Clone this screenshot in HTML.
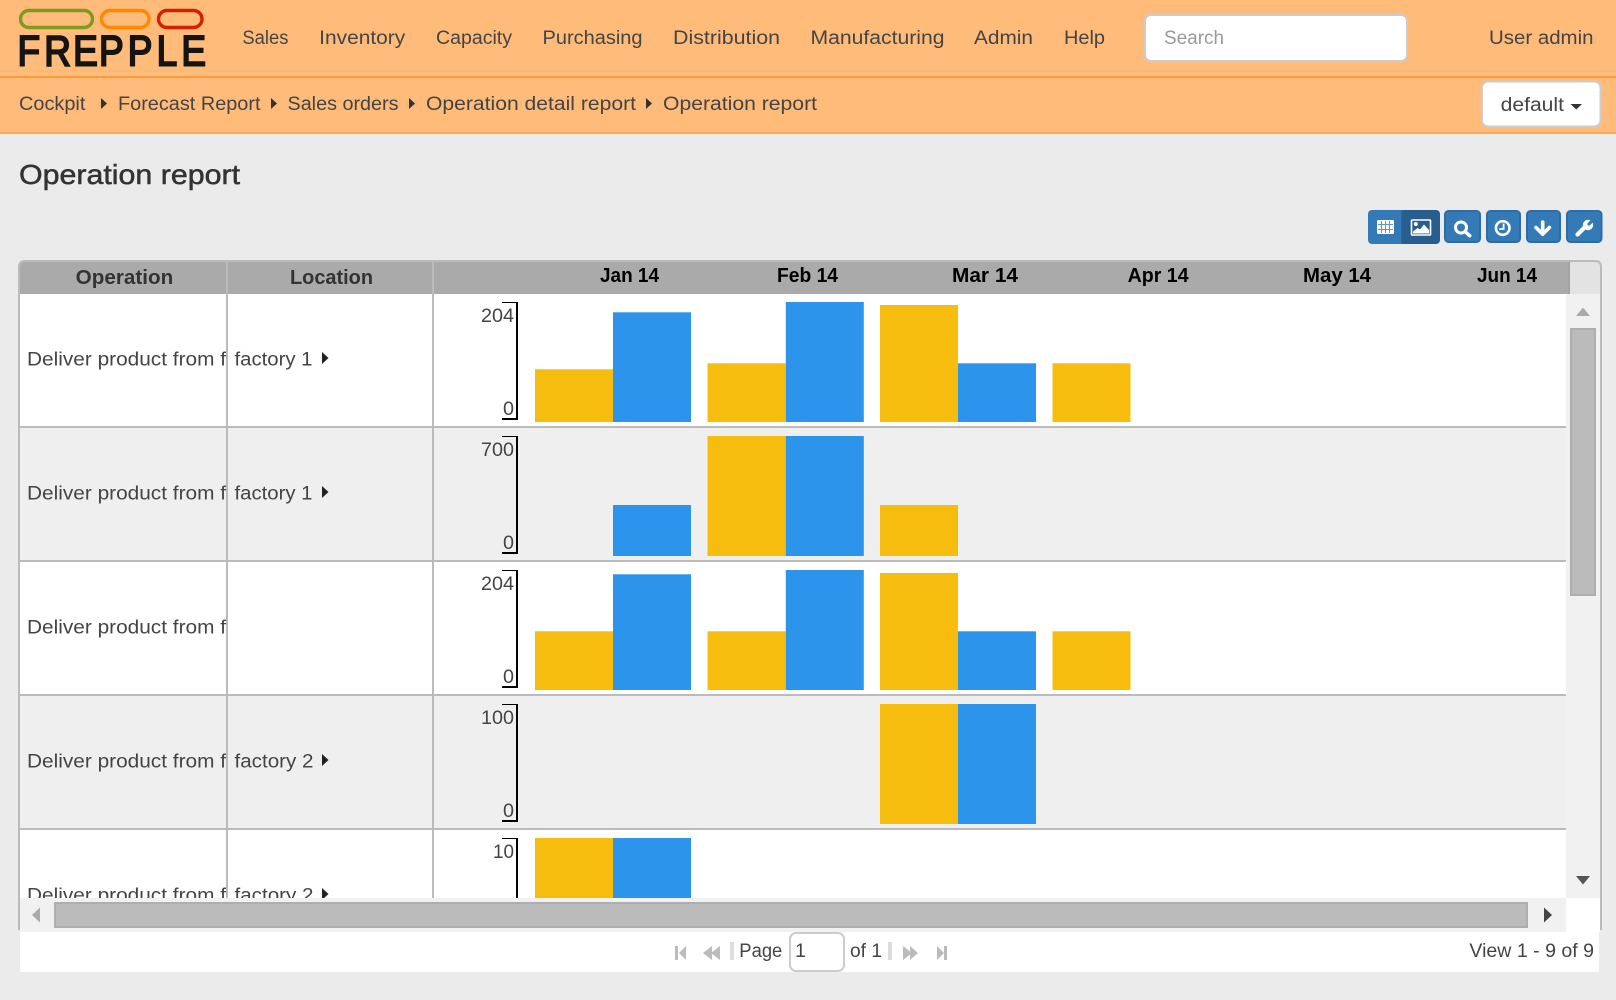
<!DOCTYPE html>
<html lang="en">
<head>
<meta charset="utf-8">
<title>Operation report</title>
<style>
html,body{margin:0;padding:0;background:#ebebeb;width:1616px;height:1000px;overflow:hidden}
svg{display:block;position:absolute;left:0;top:0}
text{font-family:"Liberation Sans",sans-serif;font-size:19.6px;fill:#444;white-space:pre}
.b{font-weight:700;font-size:20px}
.h{fill:#333}
.m{fill:#000}
.t{font-size:28px;fill:#333;stroke:#333;stroke-width:.5px}
.w{fill:#fff}
.ph{fill:#999}
.y{fill:#f6bc0e}
.u{fill:#2c95eb}
.g{fill:#bbb}
.sep{fill:#ddd}
</style>
</head>
<body>
<svg width="1616" height="1000" viewBox="0 0 1616 1000" xmlns="http://www.w3.org/2000/svg">
<defs>
<clipPath id="grid"><rect x="20" y="294" width="1546" height="604"/></clipPath>
<clipPath id="op"><rect x="20" y="294" width="206.5" height="604"/></clipPath>
</defs>
<rect width="1616" height="1000" fill="#ebebeb"/>

<!-- Header -->
<rect width="1616" height="133" fill="#ffbb7a"/>
<rect y="76" width="1616" height="2" fill="#ff9a3c"/>
<rect y="132" width="1616" height="2" fill="#ffa850"/>

<!-- Logo -->
<rect x="20.5" y="10.5" width="72" height="17" rx="8.5" fill="none" stroke="#7f9a1e" stroke-width="3.4"/>
<rect x="101.5" y="10.5" width="47.5" height="17" rx="8.5" fill="none" stroke="#ff8800" stroke-width="3.4"/>
<rect x="158.5" y="10.5" width="43.5" height="17" rx="8.5" fill="none" stroke="#d42000" stroke-width="3.4"/>
<text transform="scale(.87 1)" x="20.1 50.9 84.1 113.8 146.9 180.1 208.5" y="65.5" style="font-size:42.5px;font-weight:400;fill:#141414;stroke:#141414;stroke-width:2px">FREPPLE</text>

<!-- Nav -->
<text x="242.4" y="44" textLength="46" lengthAdjust="spacingAndGlyphs">Sales</text>
<text x="319.2" y="44" textLength="86" lengthAdjust="spacingAndGlyphs">Inventory</text>
<text x="436" y="44" textLength="76" lengthAdjust="spacingAndGlyphs">Capacity</text>
<text x="542.5" y="44" textLength="100" lengthAdjust="spacingAndGlyphs">Purchasing</text>
<text x="673" y="44" textLength="107" lengthAdjust="spacingAndGlyphs">Distribution</text>
<text x="810.5" y="44" textLength="134" lengthAdjust="spacingAndGlyphs">Manufacturing</text>
<text x="974" y="44" textLength="59" lengthAdjust="spacingAndGlyphs">Admin</text>
<text x="1064" y="44" textLength="41" lengthAdjust="spacingAndGlyphs">Help</text>
<rect x="1145" y="15" width="262" height="46" rx="6" fill="#fff" stroke="#ccc" stroke-width="2"/>
<text class="ph" x="1164" y="44" textLength="60" lengthAdjust="spacingAndGlyphs">Search</text>
<text x="1489" y="44" textLength="104.5" lengthAdjust="spacingAndGlyphs">User admin</text>

<!-- Breadcrumbs -->
<text x="19" y="110" textLength="66.4" lengthAdjust="spacingAndGlyphs">Cockpit</text>
<path d="M101 98v11l6-5.5z" fill="#333"/>
<text x="118" y="110" textLength="142.5" lengthAdjust="spacingAndGlyphs">Forecast Report</text>
<path d="M271 98v11l6-5.5z" fill="#333"/>
<text x="287.5" y="110" textLength="111" lengthAdjust="spacingAndGlyphs">Sales orders</text>
<path d="M409 98v11l6-5.5z" fill="#333"/>
<text x="426" y="110" textLength="210" lengthAdjust="spacingAndGlyphs">Operation detail report</text>
<path d="M646 98v11l6-5.5z" fill="#333"/>
<text x="663" y="110" textLength="154" lengthAdjust="spacingAndGlyphs">Operation report</text>
<rect x="1482" y="81.5" width="118.5" height="45" rx="6" fill="#fff" stroke="#ccc" stroke-width="2"/>
<text x="1500.6" y="111" textLength="63.4" lengthAdjust="spacingAndGlyphs">default</text>
<path d="M1570.5 104h11.5l-5.75 5.5z" fill="#333"/>

<!-- Title -->
<text class="t" x="19" y="184" textLength="221" lengthAdjust="spacingAndGlyphs">Operation report</text>

<!-- Toolbar -->
<g>
<path d="M1402 210h-30a4 4 0 0 0-4 4v26a4 4 0 0 0 4 4h30z" fill="#337ab7"/>
<path d="M1402 210h34a4 4 0 0 1 4 4v26a4 4 0 0 1-4 4h-34z" fill="#285e8e"/>
<rect x="1401" y="210" width="1.5" height="34" fill="#2b6599"/>
<rect x="1445" y="211" width="35" height="31" rx="3.5" fill="#337ab7" stroke="#2e6da4" stroke-width="2"/>
<rect x="1487" y="211" width="33" height="31" rx="3.5" fill="#337ab7" stroke="#2e6da4" stroke-width="2"/>
<rect x="1527" y="211" width="33" height="31" rx="3.5" fill="#337ab7" stroke="#2e6da4" stroke-width="2"/>
<rect x="1567" y="211" width="34.5" height="31" rx="3.5" fill="#337ab7" stroke="#2e6da4" stroke-width="2"/>

<!-- table icon -->
<rect x="1377" y="220" width="17" height="14" rx="1.2" fill="#fff"/>
<path d="M1381.5 221v12M1385.5 221v12M1389.5 221v12M1378 224.5h15M1378 229.5h15" stroke="#5e97ca" stroke-width="1" fill="none"/>
<!-- picture icon -->
<rect x="1411.5" y="220" width="19" height="15" fill="none" stroke="#fff" stroke-width="1.6" rx=".8"/>
<circle cx="1415.8" cy="224" r="2" fill="#fff"/>
<path d="M1413 233.5v-2l4.5-3.5 2.5 1.5 4-5 5 5.5v3.5z" fill="#fff"/>
<!-- search -->
<circle cx="1461" cy="227.5" r="5.5" fill="none" stroke="#fff" stroke-width="3"/>
<path d="M1465 231.5l4.8 4.3" stroke="#fff" stroke-width="3.4" stroke-linecap="round" fill="none"/>
<!-- clock -->
<circle cx="1502.7" cy="228" r="6.8" fill="none" stroke="#fff" stroke-width="2.6"/>
<path d="M1503.6 223.5v5.5h-4.4" fill="none" stroke="#fff" stroke-width="1.8"/>
<!-- arrow -->
<path d="M1542.7 222v11.5M1536 227.5l6.7 6.7 6.7-6.7" fill="none" stroke="#fff" stroke-width="3.6" stroke-linecap="round" stroke-linejoin="round"/>
<!-- wrench -->
<path d="M1577.5 234.5l9-9" stroke="#fff" stroke-width="4.2" stroke-linecap="round" fill="none"/>
<circle cx="1588" cy="225" r="5.2" fill="#fff"/>
<path d="M1589 224l5-5" stroke="#337ab7" stroke-width="3.2" stroke-linecap="round" fill="none"/>
</g>

<!-- Grid rows -->
<g clip-path="url(#grid)">
<rect x="20" y="294" width="1546" height="132" fill="#fff"/>
<rect x="20" y="428" width="1546" height="132" fill="#efefef"/>
<rect x="20" y="562" width="1546" height="132" fill="#fff"/>
<rect x="20" y="696" width="1546" height="132" fill="#efefef"/>
<rect x="20" y="830" width="1546" height="68" fill="#fff"/>
<rect x="20" y="426" width="1546" height="2" fill="#bbb"/>
<rect x="20" y="560" width="1546" height="2" fill="#bbb"/>
<rect x="20" y="694" width="1546" height="2" fill="#bbb"/>
<rect x="20" y="828" width="1546" height="2" fill="#bbb"/>
<rect x="226" y="294" width="2" height="604" fill="#bbb"/>
<rect x="432" y="294" width="2" height="604" fill="#bbb"/>

<g clip-path="url(#op)">
<text x="27" y="365.5" textLength="199" lengthAdjust="spacingAndGlyphs">Deliver product from f</text>
<text x="27" y="499.5" textLength="199" lengthAdjust="spacingAndGlyphs">Deliver product from f</text>
<text x="27" y="633.5" textLength="199" lengthAdjust="spacingAndGlyphs">Deliver product from f</text>
<text x="27" y="767.5" textLength="199" lengthAdjust="spacingAndGlyphs">Deliver product from f</text>
<text x="27" y="901.5" textLength="199" lengthAdjust="spacingAndGlyphs">Deliver product from f</text>
</g>

<text x="234.5" y="365.5" textLength="78" lengthAdjust="spacingAndGlyphs">factory 1</text>
<path d="M322 352v12l6.5-6z" fill="#222"/>
<text x="234.5" y="499.5" textLength="78" lengthAdjust="spacingAndGlyphs">factory 1</text>
<path d="M322 486v12l6.5-6z" fill="#222"/>
<text x="234.5" y="767.5" textLength="79" lengthAdjust="spacingAndGlyphs">factory 2</text>
<path d="M322 754v12l6.5-6z" fill="#222"/>
<text x="234.5" y="901.5" textLength="79" lengthAdjust="spacingAndGlyphs">factory 2</text>
<path d="M322 888v12l6.5-6z" fill="#222"/>

<!-- Row 1 -->
<path d="M502 302.5h15.2" fill="none" stroke="#000" stroke-width="1"/>
<path d="M517 302v118M502 419h16" fill="none" stroke="#000" stroke-width="2"/>
<text x="481" y="322" textLength="33" lengthAdjust="spacingAndGlyphs">204</text>
<text x="503" y="415" textLength="11" lengthAdjust="spacingAndGlyphs">0</text>
<rect class="y" x="535" y="369.3" width="78" height="52.7"/>
<rect class="u" x="613" y="312.3" width="78" height="109.7"/>
<rect class="y" x="707.5" y="363.3" width="78.3" height="58.7"/>
<rect class="u" x="785.8" y="302" width="78" height="120"/>
<rect class="y" x="880" y="305" width="78" height="117"/>
<rect class="u" x="958" y="363.3" width="78" height="58.7"/>
<rect class="y" x="1052.5" y="363.3" width="78" height="58.7"/>

<!-- Row 2 -->
<path d="M502 436.5h15.2" fill="none" stroke="#000" stroke-width="1"/>
<path d="M517 436v118M502 553h16" fill="none" stroke="#000" stroke-width="2"/>
<text x="481" y="456" textLength="33" lengthAdjust="spacingAndGlyphs">700</text>
<text x="503" y="549" textLength="11" lengthAdjust="spacingAndGlyphs">0</text>
<rect class="u" x="613" y="505" width="78" height="51"/>
<rect class="y" x="707.5" y="436" width="78.3" height="120"/>
<rect class="u" x="785.8" y="436" width="78" height="120"/>
<rect class="y" x="880" y="505" width="78" height="51"/>

<!-- Row 3 -->
<path d="M502 570.5h15.2" fill="none" stroke="#000" stroke-width="1"/>
<path d="M517 570v118M502 687h16" fill="none" stroke="#000" stroke-width="2"/>
<text x="481" y="590" textLength="33" lengthAdjust="spacingAndGlyphs">204</text>
<text x="503" y="683" textLength="11" lengthAdjust="spacingAndGlyphs">0</text>
<rect class="y" x="535" y="631.3" width="78" height="58.7"/>
<rect class="u" x="613" y="574.3" width="78" height="115.7"/>
<rect class="y" x="707.5" y="631.3" width="78.3" height="58.7"/>
<rect class="u" x="785.8" y="570" width="78" height="120"/>
<rect class="y" x="880" y="573" width="78" height="117"/>
<rect class="u" x="958" y="631.3" width="78" height="58.7"/>
<rect class="y" x="1052.5" y="631.3" width="78" height="58.7"/>

<!-- Row 4 -->
<path d="M502 704.5h15.2" fill="none" stroke="#000" stroke-width="1"/>
<path d="M517 704v118M502 821h16" fill="none" stroke="#000" stroke-width="2"/>
<text x="481" y="724" textLength="33" lengthAdjust="spacingAndGlyphs">100</text>
<text x="503" y="817" textLength="11" lengthAdjust="spacingAndGlyphs">0</text>
<rect class="y" x="880" y="704" width="78" height="120"/>
<rect class="u" x="958" y="704" width="78" height="120"/>

<!-- Row 5 -->
<path d="M502 838.5h15.2" fill="none" stroke="#000" stroke-width="1"/>
<path d="M517 838v70" fill="none" stroke="#000" stroke-width="2"/>
<text x="493" y="858" textLength="21" lengthAdjust="spacingAndGlyphs">10</text>
<rect class="y" x="535" y="838" width="78" height="120"/>
<rect class="u" x="613" y="838" width="78" height="120"/>
</g>

<!-- Grid header -->
<rect x="20" y="262" width="1550" height="32" fill="#aaa"/>
<rect x="1568" y="262" width="2" height="32" fill="#a3a3a3"/>
<rect x="1570" y="262" width="31" height="32" fill="#e3e3e3"/>
<rect x="226" y="262" width="2" height="32" fill="#bbb"/>
<rect x="432" y="262" width="2" height="32" fill="#bbb"/>
<text class="b h" x="75.7" y="284" textLength="97.5" lengthAdjust="spacingAndGlyphs">Operation</text>
<text class="b h" x="290" y="284" textLength="83" lengthAdjust="spacingAndGlyphs">Location</text>
<text class="b m" x="600" y="282" textLength="59" lengthAdjust="spacingAndGlyphs">Jan 14</text>
<text class="b m" x="777" y="282" textLength="61" lengthAdjust="spacingAndGlyphs">Feb 14</text>
<text class="b m" x="952" y="282" textLength="66" lengthAdjust="spacingAndGlyphs">Mar 14</text>
<text class="b m" x="1127.6" y="282" textLength="61" lengthAdjust="spacingAndGlyphs">Apr 14</text>
<text class="b m" x="1303" y="282" textLength="68" lengthAdjust="spacingAndGlyphs">May 14</text>
<text class="b m" x="1477" y="282" textLength="60" lengthAdjust="spacingAndGlyphs">Jun 14</text>

<!-- Vertical scrollbar -->
<rect x="1566" y="294" width="34" height="604" fill="#f1f1f1"/>
<rect x="1571" y="329" width="24" height="266" fill="#bbb" stroke="#aeaeae" stroke-width="2"/>
<path d="M1576 316l7-8.5 7 8.5z" fill="#aaa"/>
<path d="M1576 876h14l-7 8.5z" fill="#555"/>

<!-- Horizontal scrollbar -->
<rect x="20" y="898" width="1546" height="34" fill="#f1f1f1"/>
<rect x="1566" y="898" width="34" height="34" fill="#fff"/>
<rect x="55" y="903" width="1472" height="24" fill="#bbb" stroke="#aeaeae" stroke-width="2"/>
<path d="M40 907.5v15l-8-7.5z" fill="#aaa"/>
<path d="M1544 907.5v15l8-7.5z" fill="#444"/>

<!-- Footer -->
<rect x="20" y="932" width="1579" height="40" fill="#fff"/>
<path d="M19 930V267q0-6 6-6H1595q6 0 6 6V930" fill="none" stroke="#bbb" stroke-width="2"/>

<path d="M675 946h3v14h-3zM686 946v14l-7-7z" class="g"/>
<path d="M712 946v14l-9-7zM720 946v14l-9-7z" class="g"/>
<rect class="sep" x="730" y="942" width="4" height="18"/>
<text x="739.3" y="957" textLength="43" lengthAdjust="spacingAndGlyphs">Page</text>
<rect x="790" y="933" width="54" height="38" rx="6" fill="#fff" stroke="#ccc" stroke-width="2"/>
<text x="795" y="957">1</text>
<text x="850" y="957" textLength="32" lengthAdjust="spacingAndGlyphs">of 1</text>
<rect class="sep" x="888" y="942" width="4" height="18"/>
<path d="M903 946v14l9-7zM910 946v14l8-7z" class="g"/>
<path d="M937 946v14l7-7zM944 946h3v14h-3z" class="g"/>
<text x="1469.4" y="957" textLength="124.6" lengthAdjust="spacingAndGlyphs">View 1 - 9 of 9</text>
</svg>
</body>
</html>
